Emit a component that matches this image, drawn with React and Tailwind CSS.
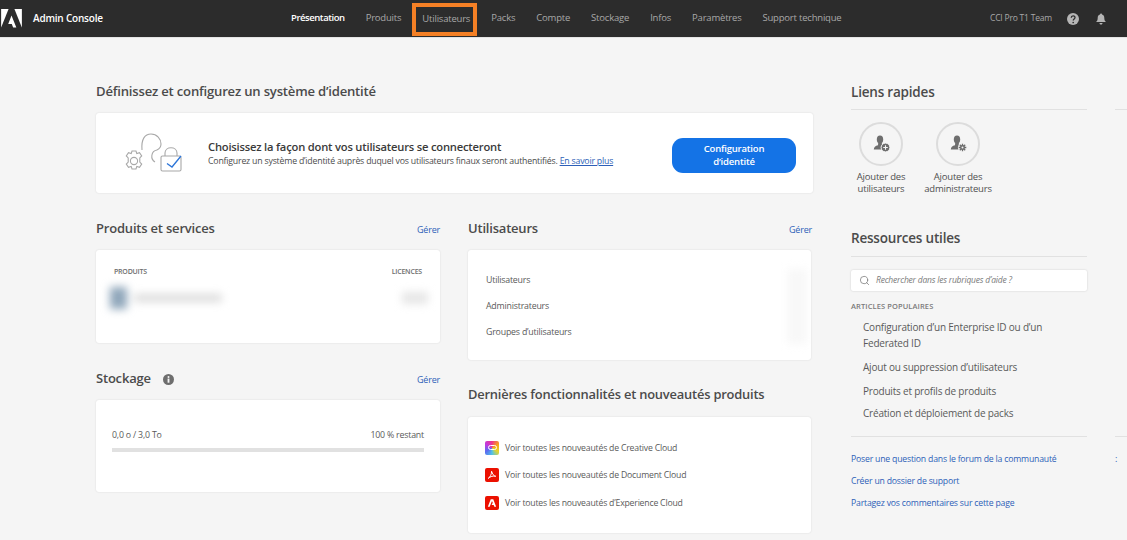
import { Search } from "lucide-react";

const navItems = ["Produits", "Utilisateurs", "Packs", "Compte", "Stockage", "Infos", "Paramètres", "Support technique"];

function AdobeMark({ className }) {
  return (
    <svg viewBox="0 0 24 22" className={className} fill="currentColor">
      <path d="M0 0h8.6L0 21.5z" />
      <path d="M15.4 0H24v21.5z" />
      <path d="M12 7.6l5.6 13.9h-3.7l-1.6-4.2H8.2z" />
    </svg>
  );
}

function IdentityIllustration() {
  return (
    <svg viewBox="0 0 58 42" className="w-[58px] h-[42px]" fill="none" stroke="#a8a8a8" strokeWidth="1.100">
      <path d="M18 18C17 7 21 2 27 2C33 2 37 7 37 12C37 15 35 17 33 18" />
      <path d="M33 18C27 19 26 27 31 30" />
      <circle cx="10" cy="29" r="3.600" />
      <path d="M8 19h4l.8 2.600 2.700-.9 2.200 3.200-1.900 2 0 4.200 1.900 2-2.200 3.200-2.700-.9-.8 2.600H8l-.8-2.600-2.700.9-2.200-3.200 1.900-2v-4.200l-1.900-2 2.200-3.200 2.700.9z" />
      <rect x="37" y="24" width="20" height="15" rx="1.500" />
      <path d="M41 24v-3c0-7 12-7 12 0v3" />
      <path d="M43 31.500l5 3.500 9-11" stroke="#2c75d8" strokeWidth="1.300" />
    </svg>
  );
}

function QuickLink({ badge, label, width }) {
  return (
    <div className={`flex flex-col items-center ${width}`}>
      <div className="w-[44px] h-[44px] rounded-full border-2 border-[#dcdcdc] flex items-center justify-center">
        <svg viewBox="0 0 20 20" className="w-[20px] h-[20px]" fill="#6e6e6e">
          <ellipse cx="9" cy="5.500" rx="3.200" ry="3.900" />
          <path d="M7.200 9h3.600l.4 2.200c1 .3 1.800.6 2.300 1L12 15.500H2.800c0-2.400 1.600-3.700 4.200-4.300z" />
          {badge === "plus" ? (
            <g>
              <circle cx="14.500" cy="13.500" r="4.400" stroke="#f5f5f5" strokeWidth="1" />
              <path d="M14.500 11.200v4.600M12.200 13.500h4.600" stroke="#f5f5f5" strokeWidth="1.100" />
            </g>
          ) : (
            <g>
              <circle cx="14.500" cy="13.500" r="4.600" fill="#f5f5f5" />
              <path d="M14.500 9.700v7.600M10.700 13.500h7.600M11.800 10.800l5.400 5.400M17.200 10.800l-5.400 5.400" stroke="#6e6e6e" strokeWidth="1.300" />
              <circle cx="14.500" cy="13.500" r="2.400" />
              <circle cx="14.500" cy="13.500" r="1" fill="#f5f5f5" />
            </g>
          )}
        </svg>
      </div>
      <p className="mt-[5px] text-[9.500px] leading-[12px] text-[#505050] text-center whitespace-nowrap">{label}</p>
    </div>
  );
}

function SectionTitle({ children, manage }) {
  return (
    <div className="flex items-center justify-between h-[20px] pt-[2px]">
      <h2 className="text-[13px] font-semibold text-[#4b4b4b]">{children}</h2>
      {manage && <a className="text-[9px] font-medium text-[#2d5fb8] pt-[2px]">Gérer</a>}
    </div>
  );
}

function Card({ className, children }) {
  return <div className={`bg-white rounded-[3px] shadow-[0_0_2px_rgba(0,0,0,0.12)] ${className}`}>{children}</div>;
}

export default function App() {
  return (
    <div className="w-[1127px] h-[540px] overflow-hidden bg-[#f5f5f5] font-['Open_Sans',sans-serif] tracking-[-0.2px]">
      {/* Top bar */}
      <header className="h-[38px] bg-[#2c2c2c] border-b border-[#e4e4e4] flex items-center text-[#a8a8a8] text-[9.500px]">
        <AdobeMark className="w-[21px] h-[19px] ml-[1px] text-white shrink-0" />
        <span className="ml-[11px] w-[70px] text-white font-semibold text-[10px]">Admin Console</span>
        <nav className="ml-[188px] flex items-center gap-[21px] h-full tracking-[-0.2px]">
          <a className="text-white font-semibold tracking-[-0.45px]">Présentation</a>
          {navItems.map((item) =>
            item === "Utilisateurs" ? (
              <a key={item} className="-ml-[10px] -mr-[7px] mt-[1px] pl-[6px] pr-[3px] h-[33px] flex items-center border-[4px] border-[#f58025]">{item}</a>
            ) : (
              <a key={item}>{item}</a>
            )
          )}
        </nav>
        <span className="ml-auto text-[8.500px]">CCI Pro T1 Team</span>
        <svg viewBox="0 0 24 24" className="ml-[15px] w-[12px] h-[12px]">
          <circle cx="12" cy="12" r="12" fill="#b5b5b5" />
          <path d="M8.500 9.500c0-5 7.500-5 7.500-.5 0 3-3.500 3-3.500 6" fill="none" stroke="#2c2c2c" strokeWidth="2.600" />
          <circle cx="12.400" cy="19" r="1.700" fill="#2c2c2c" />
        </svg>
        <svg viewBox="0 0 24 24" className="ml-[16px] mr-[20px] w-[12px] h-[12px]" fill="#b5b5b5">
          <path d="M12 1c1.200 0 2 .8 2 1.800 3.400 1 4.600 3.600 4.600 7.200 0 4 1 6 3.400 8H2c2.400-2 3.400-4 3.400-8 0-3.600 1.200-6.200 4.600-7.200C10 1.800 10.800 1 12 1z" />
          <path d="M9 20h6c0 4-6 4-6 0z" />
        </svg>
      </header>

      <main className="flex pl-[96px]">
        <div className="w-[717px] shrink-0">
          <h1 className="mt-[44px] h-[20px] flex items-center text-[13.100px] font-semibold text-[#4b4b4b]">
            Définissez et configurez un système d’identité
          </h1>
          <Card className="mt-[11px] h-[80px] flex items-center">
            <div className="ml-[28px] w-[58px]"><IdentityIllustration /></div>
            <div className="ml-[26px]">
              <p className="text-[11.200px] font-semibold text-[#3a3a3a] leading-[15px]">Choisissez la façon dont vos utilisateurs se connecteront</p>
              <p className="text-[8.750px] text-[#4b4b4b] leading-[14px]">
                Configurez un système d’identité auprès duquel vos utilisateurs finaux seront authentifiés.{" "}
                <a className="text-[#2d5fb8] underline">En savoir plus</a>
              </p>
            </div>
            <button className="ml-auto mr-[17px] mt-[4px] w-[124px] h-[35px] rounded-[11px] bg-[#1473e6] text-white text-[9.500px] font-semibold leading-[13px]">
              Configuration<br />d’identité
            </button>
          </Card>

          <div className="mt-[25px] grid grid-cols-[344px_344px] gap-x-[28px]">
            <div>
              <SectionTitle manage>Produits et services</SectionTitle>
              <Card className="mt-[12px] h-[93px] pt-[17px] overflow-hidden">
                <div className="flex justify-between px-[18px] text-[7px] font-semibold text-[#6e6e6e] leading-[9px]">
                  <span>PRODUITS</span>
                  <span>LICENCES</span>
                </div>
                <div className="mt-[11px] flex items-center justify-between pl-[14px] pr-[12px]">
                  <div className="flex items-center gap-[7px] blur-[4px]">
                    <div className="w-[17px] h-[22px] bg-[#8fa6ba]" />
                    <div className="w-[88px] h-[8px] bg-[#dcdcdc]" />
                  </div>
                  <div className="w-[26px] h-[12px] bg-[#e6e6e6] blur-[4px]" />
                </div>
              </Card>

              <div className="mt-[25px] flex items-center justify-between h-[20px] pt-[2px]">
                <h2 className="flex items-center gap-[12px] text-[13px] font-semibold text-[#4b4b4b]">
                  Stockage
                  <svg viewBox="0 0 24 24" className="w-[11px] h-[11px]">
                    <circle cx="12" cy="12" r="12" fill="#6e6e6e" />
                    <rect x="10" y="10" width="4" height="9" fill="#f5f5f5" />
                    <circle cx="12" cy="6.500" r="2.200" fill="#f5f5f5" />
                  </svg>
                </h2>
                <a className="text-[9px] font-medium text-[#2d5fb8] pt-[2px]">Gérer</a>
              </div>
              <Card className="mt-[12px] h-[92px] px-[16px] pt-[29px]">
                <div className="flex justify-between text-[8.800px] leading-[12px] text-[#5a5a5a]">
                  <span>0,0 o / 3,0 To</span>
                  <span>100 % restant</span>
                </div>
                <div className="mt-[7px] h-[4px] bg-[#e1e1e1]" />
              </Card>
            </div>

            <div>
              <SectionTitle manage>Utilisateurs</SectionTitle>
              <Card className="mt-[12px] mr-[1px] h-[110px] pl-[18px] pt-[2px] flex justify-between items-center overflow-hidden text-[8.800px] leading-[13px] text-[#5a5a5a]">
                <div className="flex flex-col gap-[13px]">
                  <span>Utilisateurs</span>
                  <span>Administrateurs</span>
                  <span>Groupes d’utilisateurs</span>
                </div>
                <div className="w-[20px] h-[75px] mr-[4px] bg-[#f8f8f8] blur-[4px]" />
              </Card>

              <div className="mt-[25px] h-[20px] flex items-center">
                <h2 className="text-[12.900px] font-semibold text-[#4b4b4b]">Dernières fonctionnalités et nouveautés produits</h2>
              </div>
              <Card className="mt-[12px] mr-[1px] h-[116px] pl-[17px] flex flex-col justify-center gap-[13.500px] text-[8.700px] leading-[14px] text-[#5a5a5a]">
                <div className="flex items-center gap-[6px]">
                  <span className="w-[14px] h-[14px] rounded-[2px] bg-[conic-gradient(#f0348a,#f7a21b,#e8d52a,#4fc3e8,#5b6cf0,#c03be0,#f0348a)] flex items-center justify-center">
                    <span className="w-[9px] h-[5px] rounded-full border border-white" />
                  </span>
                  Voir toutes les nouveautés de Creative Cloud
                </div>
                <div className="flex items-center gap-[6px]">
                  <span className="w-[14px] h-[14px] rounded-[2px] bg-[#eb1000] flex items-center justify-center">
                    <svg viewBox="0 0 12 12" className="w-[10px] h-[10px]" fill="none" stroke="white" strokeWidth="1.200">
                      <path d="M5.500 1.500C5.500 5 4 8.500 1.500 10 3.500 8 8 6.500 10.500 7.500 8 7.500 6.500 4.500 5.500 1.500z" />
                    </svg>
                  </span>
                  Voir toutes les nouveautés de Document Cloud
                </div>
                <div className="flex items-center gap-[6px]">
                  <span className="w-[14px] h-[14px] rounded-[2px] bg-[#eb1000] flex items-center justify-center">
                    <svg viewBox="0 0 12 12" className="w-[10px] h-[10px]" fill="white">
                      <path d="M4.500 1.500h3L11 10.500H8.800L8 8.300H5.500l1-2 .6 0L6 3.600 3.200 10.500H1z" />
                    </svg>
                  </span>
                  Voir toutes les nouveautés d’Experience Cloud
                </div>
              </Card>
            </div>
          </div>
        </div>

        {/* Right rail */}
        <aside className="ml-[38px] w-[236px] shrink-0">
          <h2 className="mt-[44px] h-[20px] flex items-center text-[13.500px] font-semibold text-[#4b4b4b]">Liens rapides</h2>
          <div className="mt-[7px] border-t border-[#e1e1e1] pt-[12px] flex gap-[12px]">
            <QuickLink badge="plus" label={<>Ajouter des<br />utilisateurs</>} width="w-[60px]" />
            <QuickLink badge="gear" label={<>Ajouter des<br />administrateurs</>} width="w-[70px]" />
          </div>

          <h2 className="mt-[33px] h-[20px] flex items-center text-[13.500px] font-semibold text-[#4b4b4b]">Ressources utiles</h2>
          <div className="mt-[8px] border-t border-[#e1e1e1] pt-[13px]">
            <div className="h-[21px] bg-white rounded-[2px] shadow-[0_0_2px_rgba(0,0,0,0.18)] flex items-center pl-[8px] gap-[6px]">
              <Search className="w-[11px] h-[11px] text-[#6e6e6e]" strokeWidth={1.5} />
              <span className="text-[8.500px] italic text-[#7a7a7a]">Rechercher dans les rubriques d’aide ?</span>
            </div>
            <p className="mt-[10px] text-[7.500px] font-semibold text-[#7a7a7a] leading-[10px] tracking-[0.1px]">ARTICLES POPULAIRES</p>
            <ul className="mt-[8px] pl-[12px] text-[10px] text-[#5a5a5a] leading-[16px]">
              <li>Configuration d’un Enterprise ID ou d’un<br />Federated ID</li>
              <li className="mt-[8px]">Ajout ou suppression d’utilisateurs</li>
              <li className="mt-[8px]">Produits et profils de produits</li>
              <li className="mt-[6px]">Création et déploiement de packs</li>
            </ul>
          </div>
          <div className="mt-[15px] border-t border-[#e1e1e1] pt-[16px] flex flex-col gap-[9px] text-[8.700px] font-medium leading-[13px] text-[#2d5fb8]">
            <a>Poser une question dans le forum de la communauté</a>
            <a>Créer un dossier de support</a>
            <a>Partagez vos commentaires sur cette page</a>
          </div>
        </aside>

        {/* Cut-off column at the window's edge */}
        <div className="ml-[28px] w-[12px] shrink-0 overflow-hidden">
          <div className="mt-[71px] border-t border-[#e1e1e1]" />
          <div className="mt-[326px] border-t border-[#e1e1e1]" />
          <p className="mt-[15px] text-[9px] leading-[13px] text-[#2d5fb8]">:</p>
        </div>
      </main>
    </div>
  );
}
